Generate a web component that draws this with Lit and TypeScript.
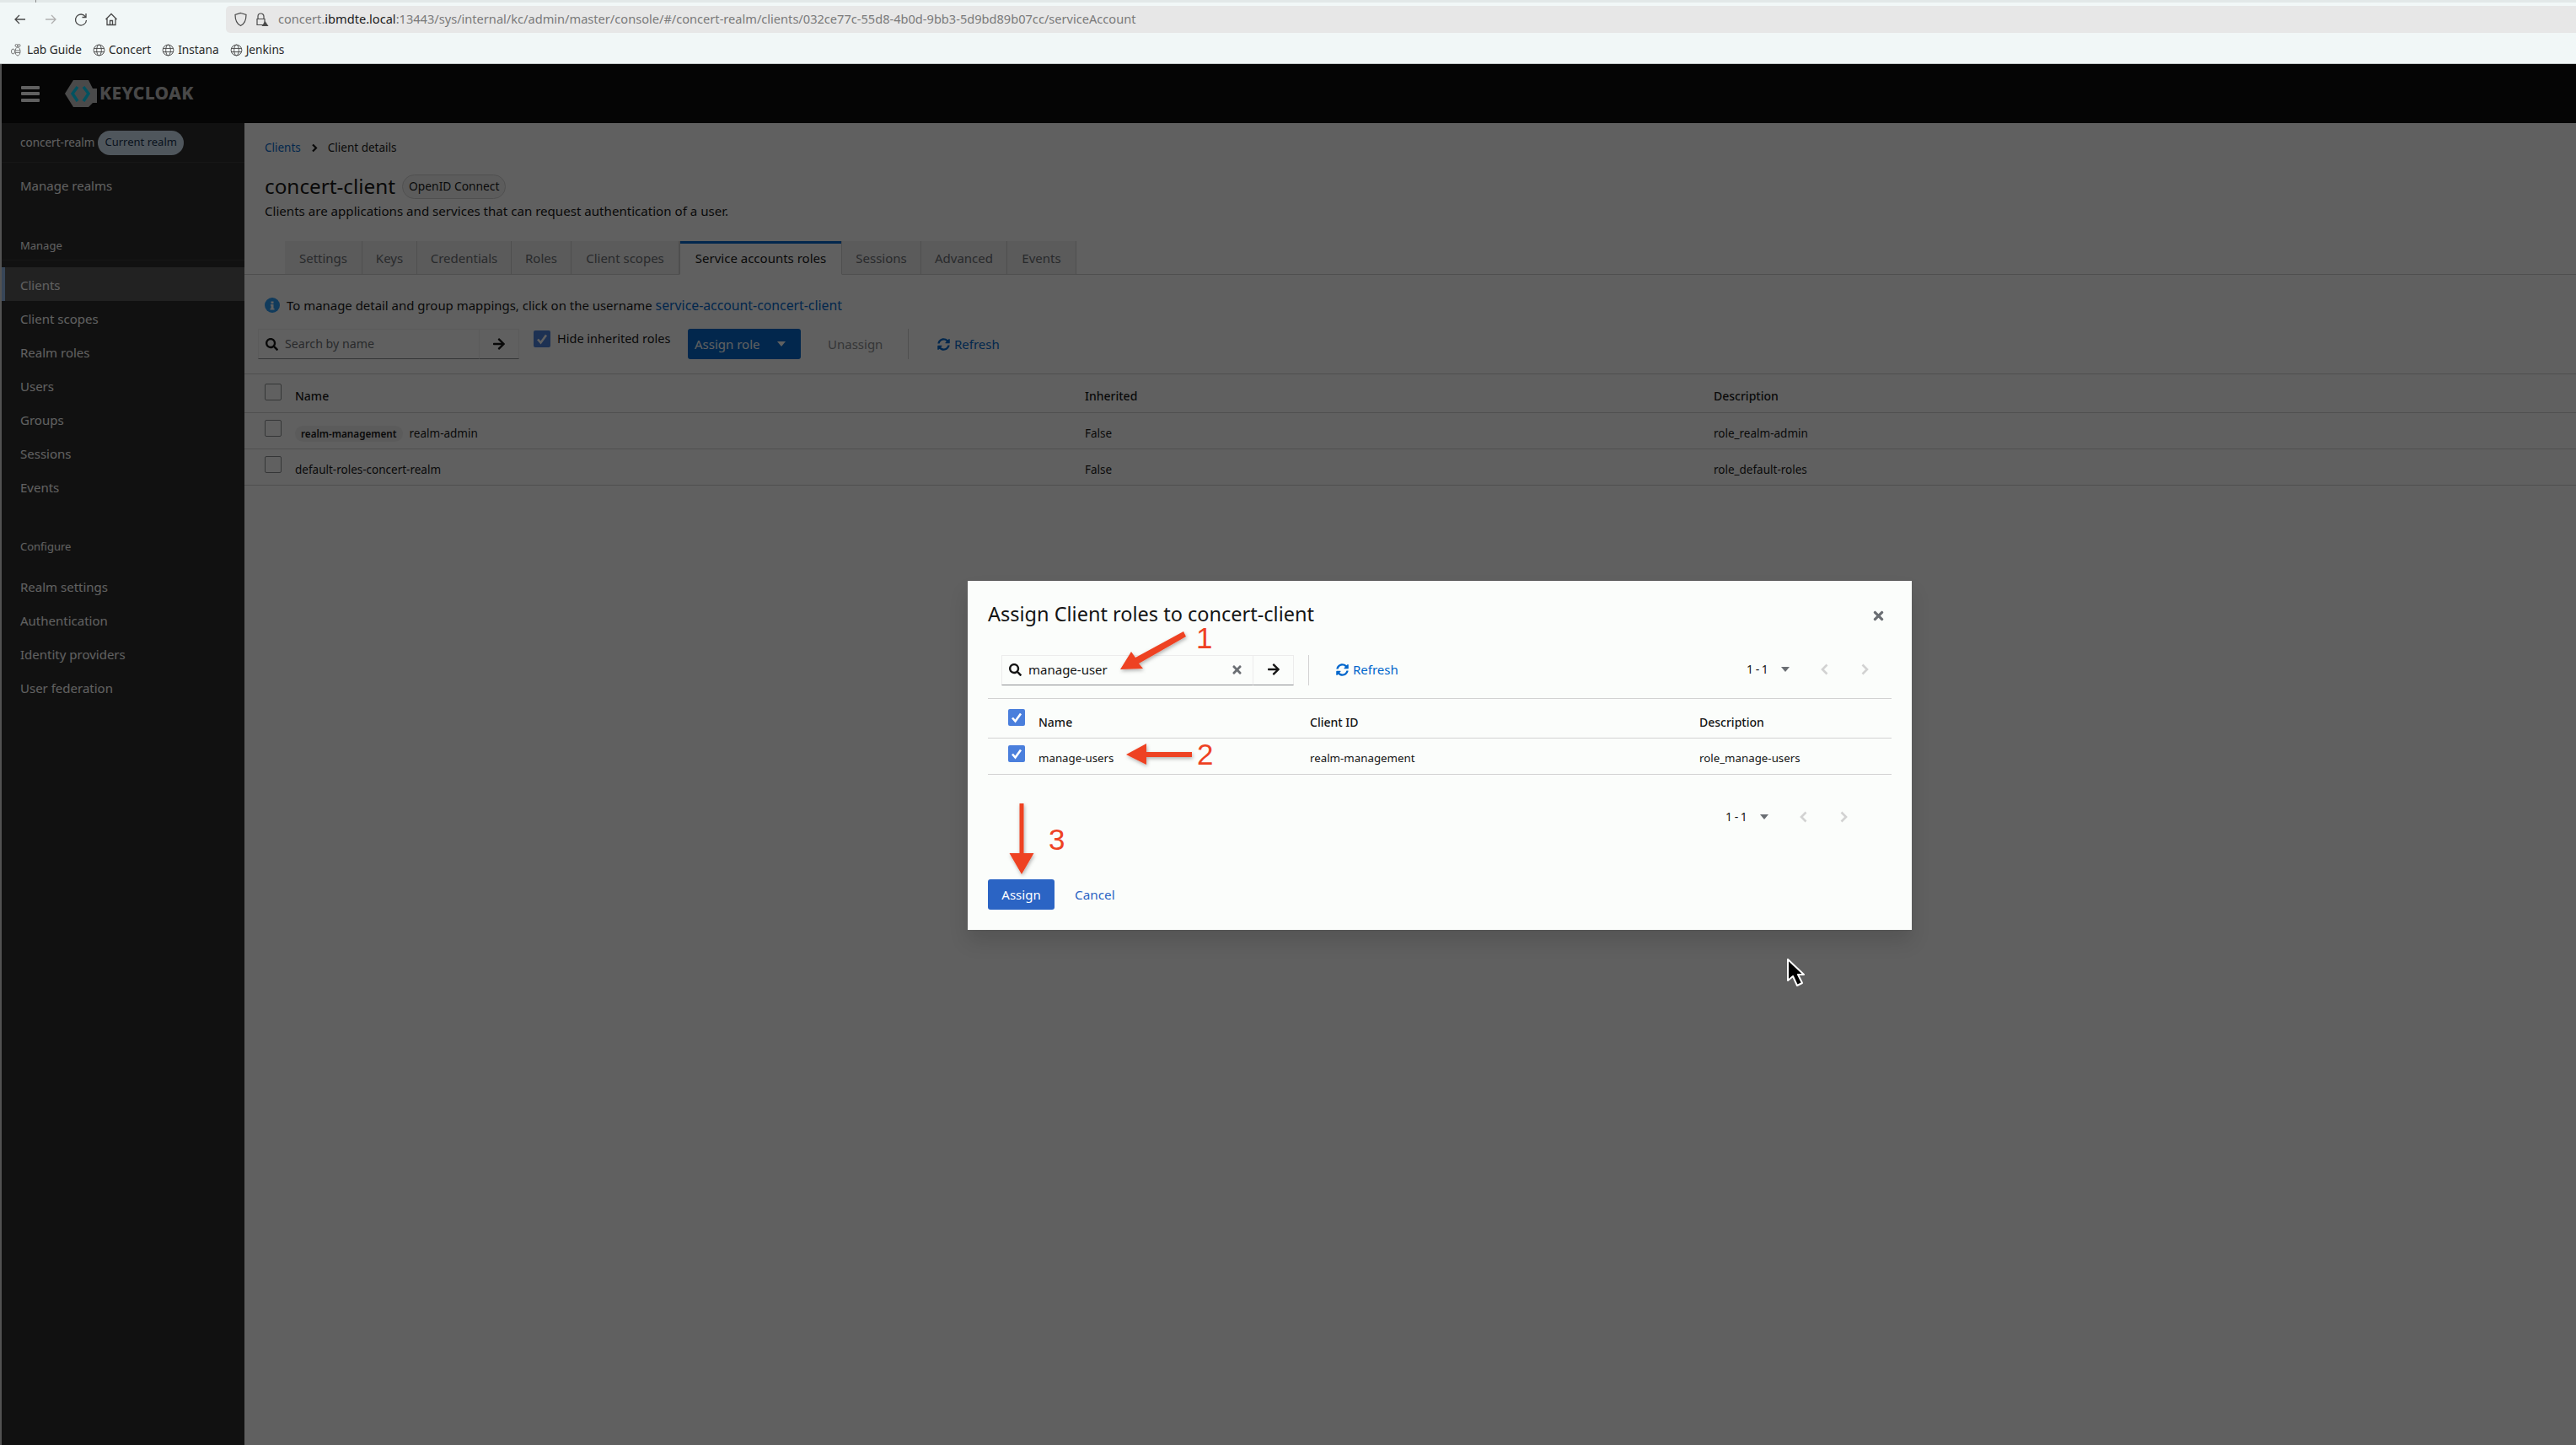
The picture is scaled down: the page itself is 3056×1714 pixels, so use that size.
import {LitElement, html, css, svg} from 'lit';
import {customElement} from 'lit/decorators.js';

const search = svg`<path d="M505 442.700 405.300 343c-4.500-4.500-10.600-7-17-7H372c27.600-35.300 44-79.700 44-128C416 93.100 322.900 0 208 0S0 93.100 0 208s93.100 208 208 208c48.300 0 92.700-16.400 128-44v16.300c0 6.400 2.500 12.500 7 17l99.700 99.700c9.400 9.400 24.600 9.400 33.900 0l28.300-28.300c9.400-9.400 9.400-24.600.1-34zM208 336c-70.700 0-128-57.200-128-128 0-70.700 57.200-128 128-128 70.700 0 128 57.200 128 128 0 70.700-57.200 128-128 128z"/>`;
const arrowRight = svg`<path d="M190.500 66.900l22.200-22.200c9.400-9.400 24.600-9.400 33.900 0L441 239c9.400 9.400 9.400 24.600 0 33.900L246.600 467.300c-9.400 9.400-24.600 9.400-33.900 0l-22.200-22.200c-9.500-9.500-9.300-25 .4-34.300L311.400 296H24c-13.300 0-24-10.700-24-24v-32c0-13.300 10.700-24 24-24h287.400L190.900 101.200c-9.800-9.300-10-24.800-.4-34.300z"/>`;
const sync = svg`<path d="M370.720 133.280C339.458 104.008 298.888 87.962 255.848 88c-77.458.068-144.328 53.178-162.791 126.850-1.344 5.363-6.122 9.150-11.651 9.150H24.103c-7.498 0-13.194-6.807-11.807-14.176C33.933 94.924 134.813 8 256 8c66.448 0 126.791 26.136 171.315 68.685L463.030 40.970C478.149 25.851 504 36.559 504 57.941V192c0 13.255-10.745 24-24 24H345.941c-21.382 0-32.090-25.851-16.971-40.971l41.750-41.749zM32 296h134.059c21.382 0 32.090 25.851 16.971 40.971l-41.750 41.750c31.262 29.273 71.835 45.319 114.876 45.280 77.418-.07 144.315-53.144 162.787-126.849 1.344-5.363 6.122-9.150 11.651-9.150h57.304c7.498 0 13.194 6.807 11.807 14.176C478.067 417.076 377.187 504 256 504c-66.448 0-126.791-26.136-171.315-68.685L48.970 471.030C33.851 486.149 8 475.441 8 454.059V320c0-13.255 10.745-24 24-24z"/>`;
const times = svg`<path d="M242.720 256l100.070-100.070c12.280-12.280 12.280-32.190 0-44.480l-22.240-22.240c-12.280-12.280-32.190-12.280-44.480 0L176 189.280 75.930 89.210c-12.280-12.280-32.190-12.280-44.480 0L9.210 111.450c-12.280 12.280-12.280 32.190 0 44.480L109.280 256 9.210 356.070c-12.280 12.280-12.280 32.190 0 44.480l22.240 22.240c12.280 12.280 32.200 12.280 44.480 0L176 322.720l100.070 100.070c12.280 12.280 32.200 12.280 44.480 0l22.240-22.240c12.280-12.280 12.280-32.190 0-44.480L242.720 256z"/>`;

const icon = (body: unknown, vb: string, cls: string) =>
  html`<svg class=${cls} viewBox=${vb} fill="currentColor" aria-hidden="true">${body}</svg>`;

const check = html`<span class="cb on"><svg viewBox="0 0 20 20"><path d="M5 10.500 8.500 14.500 15 5.500" fill="none" stroke="#fff" stroke-width="2.600"/></svg></span>`;

const globe = html`<svg class="globe" viewBox="0 0 16 16" fill="none" stroke="#4a4a4a" stroke-width="1"><circle cx="8" cy="8" r="6.800"/><ellipse cx="8" cy="8" rx="3" ry="6.800"/><path d="M1.500 5.800h13M1.500 10.200h13"/></svg>`;

const sideManage = ['Clients', 'Client scopes', 'Realm roles', 'Users', 'Groups', 'Sessions', 'Events'];
const sideConfigure = ['Realm settings', 'Authentication', 'Identity providers', 'User federation'];
const tabs = ['Settings', 'Keys', 'Credentials', 'Roles', 'Client scopes', 'Service accounts roles', 'Sessions', 'Advanced', 'Events'];

@customElement('app-pager')
export class AppPager extends LitElement {
  static styles = css`
    :host { display: flex; align-items: center; font-size: 14px; color: #151515; }
    .count { width: 24px; white-space: nowrap; word-spacing: -1px; }
    .caret { width: 0; height: 0; margin-left: 17px; border: 5px solid transparent; border-top: 6px solid #6a6e73; border-bottom: 0; }
    svg { width: 9px; height: 14px; fill: none; stroke: #d2d2d2; stroke-width: 2.600; }
    .prev { margin-left: 37px; }
    .next { margin-left: 39px; }
  `;

  render() {
    return html`
      <span class="count">1 - 1</span>
      <span class="caret"></span>
      <svg class="prev" viewBox="0 0 9 14"><path d="M7.500 1.500 2 7l5.500 5.500"/></svg>
      <svg class="next" viewBox="0 0 9 14"><path d="M1.500 1.500 7 7l-5.500 5.500"/></svg>
    `;
  }
}

@customElement('app-root')
export class AppRoot extends LitElement {
  static styles = css`
    :host {
      display: block;
      width: 3056px;
      height: 1714px;
      overflow: hidden;
      position: relative;
      background: #fff;
      color: #151515;
      font-family: "Noto Sans", sans-serif;
      font-size: 15px;
      line-height: 1.2;
    }
    a { color: #06c; text-decoration: none; }

    /* browser chrome */
    .strip { height: 3px; padding-left: 42px; background: #e2e8e8; }
    .strip i { display: block; width: 1px; height: 3px; background: #8a8a8a; }
    .toolbar { height: 40px; display: flex; align-items: center; background: #f1f7f7; color: #4a4a4a; }
    .nav-ico { width: 18px; height: 18px; fill: none; stroke: #4a4a4a; stroke-width: 1.300; margin-left: 18px; }
    .nav-ico.first { margin-left: 15px; }
    .nav-ico.dim { stroke: #b0b0b0; }
    .urlbar {
      flex: 1;
      height: 32px;
      margin-left: 127px;
      padding-left: 9px;
      border-radius: 5px 0 0 5px;
      display: flex;
      align-items: center;
      gap: 8px;
      background: #e7e7e7;
      font-size: 14.600px;
      color: #7a7a7a;
    }
    .urlbar svg { width: 17px; height: 18px; fill: none; stroke: #4a4a4a; stroke-width: 1.200; }
    .urlbar .txt { margin-left: 3px; white-space: nowrap; }
    .urlbar b { font-weight: 400; color: #1c1c1c; }
    .bookmarks { height: 32px; display: flex; align-items: center; padding-left: 12px; gap: 13px; background: #f1f7f7; font-size: 13.700px; color: #2a2a2a; border-bottom: 1px solid #c4c8c8; }
    .bookmark { display: flex; align-items: center; gap: 4px; }
    .globe { width: 15px; height: 15px; flex: none; }
    .bee { width: 16px; height: 16px; flex: none; }

    /* keycloak page */
    .app { height: 1638px; position: relative; display: flex; flex-direction: column; border-left: 2px solid #dadada; }
    .masthead { height: 70px; flex: none; display: flex; align-items: center; background: #0a0a0a; padding-left: 23px; }
    .burger { width: 22px; height: 19px; display: flex; flex-direction: column; justify-content: space-between; }
    .burger i { height: 4px; background: #fff; border-radius: 1px; }
    .logo { margin-left: 30px; display: flex; align-items: center; }
    .logo svg { width: 40px; height: 36px; }
    .logo span { margin-left: 1px; font-size: 21px; font-weight: 800; letter-spacing: 0.300px; color: #bdbdbd; }
    .body { flex: 1; display: flex; min-height: 0; }

    .sidebar { width: 288px; flex: none; background: #2a2a2a; color: #fff; font-size: 15px; }
    .realm { height: 46px; display: flex; align-items: center; padding-left: 22px; gap: 4px; border-bottom: 1px solid #3a3a3a; font-size: 13.500px; }
    .realm-badge { height: 29px; padding: 0 8px; border-radius: 15px; display: flex; align-items: center; background: #d2e4f5; color: #15304d; font-size: 13px; }
    .side-item { box-sizing: border-box; height: 40px; display: flex; align-items: center; padding: 2px 0 0 22px; }
    .side-item.manage { margin-top: 7px; padding-top: 0; }
    .side-item.active { background: #575757; box-shadow: inset 4px 0 0 #92b8e8; }
    .side-title { box-sizing: border-box; height: 32px; padding: 7px 0 0 22px; font-size: 13px; border-bottom: 1px solid #3a3a3a; margin-top: 37px; }
    .side-title + .side-item { margin-top: 8px; }
    .side-title.cfg { border: 0; margin-top: 36px; height: 28px; padding-top: 8px; }
    .side-title.cfg + .side-item { margin-top: 14px; }

    .main { flex: 1; min-width: 0; display: flex; flex-direction: column; }
    .crumbs { display: flex; align-items: center; padding: 20px 0 0 24px; height: 18px; font-size: 13.500px; }
    .crumbs svg { width: 8px; height: 11px; margin: 0 12px; fill: none; stroke: #151515; stroke-width: 2.200; }
    .title-row { display: flex; align-items: center; gap: 8px; padding: 22px 0 0 24px; height: 30px; }
    .title-row h1 { margin: 0; font-size: 24.300px; font-weight: 400; }
    .label { height: 29px; box-sizing: border-box; padding: 0 7px; border: 1px solid #d2d2d2; border-radius: 15px; display: flex; align-items: center; background: #f5f5f5; font-size: 13.800px; }
    .desc { padding: 5px 0 0 24px; font-size: 15.100px; height: 28px; box-sizing: border-box; }
    .tabs { margin-top: 22px; height: 40px; box-sizing: border-box; padding-left: 48px; display: flex; border-bottom: 1px solid #d2d2d2; }
    .tab { box-sizing: border-box; height: 40px; display: flex; align-items: center; justify-content: center; background: #f0f0f0; border: 1px solid #d2d2d2; border-width: 0 1px 1px 0; color: #6a6e73; font-size: 15px; white-space: nowrap; }
    .tab.active { background: #fff; color: #151515; border-bottom-color: #fff; border-left: 1px solid #d2d2d2; box-shadow: inset 0 3px 0 #06c; }
    .alert { display: flex; align-items: center; gap: 8px; padding: 26px 0 0 24px; height: 20px; font-size: 14.950px; white-space: nowrap; }
    .alert svg { width: 18px; height: 18px; color: #2b9af3; flex: none; }
    .alert a { font-size: 15.800px; }
    .toolbar2 { display: flex; align-items: flex-start; padding: 18px 0 0 16px; height: 36px; }
    .input { box-sizing: border-box; height: 36px; display: flex; align-items: center; background: #fff; border: 1px solid #f0f0f0; border-bottom: 1px solid #8a8d90; }
    .input.field { width: 263px; padding-left: 8px; gap: 8px; color: #6a6e73; font-size: 14.200px; }
    .input.go { width: 47px; justify-content: center; color: #151515; border-left: 0; }
    .input .s { width: 15px; height: 15px; color: #151515; flex: none; }
    .input .a { width: 16px; height: 16px; }
    .check-wrap { display: flex; align-items: center; gap: 8px; margin: 2px 0 0 17px; font-size: 14.500px; width: 183px; height: 20px; white-space: nowrap; }
    .cb { width: 20px; height: 20px; box-sizing: border-box; display: inline-flex; border-radius: 2px; border: 1px solid #8a8d90; background: #fff; flex: none; }
    .cb.on { background: #4a7fdc; border: 0; }
    .cb.on svg { width: 20px; height: 20px; }
    .btn-primary { width: 134px; height: 36px; box-sizing: border-box; display: flex; align-items: center; padding-left: 8px; border-radius: 3px; background: #06c; color: #fff; font-size: 15px; gap: 20px; }
    .btn-primary i { width: 0; height: 0; border: 5px solid transparent; border-top: 6px solid #fff; border-bottom: 0; }
    .plain { width: 128px; height: 36px; display: flex; align-items: center; padding-left: 32px; box-sizing: border-box; color: #8a8d90; font-size: 15px; border-right: 1px solid #d2d2d2; }
    .refresh { display: flex; align-items: center; gap: 5px; color: #06c; font-size: 15px; height: 36px; }
    .refresh svg { width: 15px; height: 15px; }
    .toolbar2 .refresh { margin-left: 34px; }

    .grid-row { display: grid; grid-template-columns: 36px 937px 746px 1fr; border-bottom: 1px solid #d2d2d2; font-size: 13.500px; }
    .grid-row .cb { margin: 8px 0 0 0; }
    .grid-row > span:not(.cb) { padding-top: 16px; }
    .list { margin-top: 17px; border-top: 1px solid #d2d2d2; padding-left: 24px; }
    .list .grid-row { margin-left: -24px; padding-left: 24px; }
    .head { height: 45px; font-weight: 500; font-size: 14px !important; }
    .list .head .cb { margin-top: 11px; }
    .list .head > span:not(.cb) { padding-top: 18px; }
    .row { height: 42px; }
    .chip { display: inline-flex; align-items: center; height: 19px; padding: 0 7px; border-radius: 10px; background: #f0f0f0; font-size: 11.700px; font-weight: 600; margin: -2px 8px 0 0; vertical-align: middle; }

    /* dim layer with the dialog */
    .backdrop { position: absolute; inset: 0 0 0 -2px; background: rgba(3, 3, 3, .63); }
    .modal {
      position: absolute;
      left: 1148px;
      top: 613px;
      width: 1120px;
      height: 414px;
      box-sizing: border-box;
      padding: 0 24px;
      background: #fbfdfb;
      box-shadow: 0 14px 22px rgba(3, 3, 3, .12);
      display: flex;
      flex-direction: column;
    }
    .modal h2 { margin: 0; padding-top: 24px; height: 30px; font-size: 23.500px; font-weight: 400; line-height: 30px; }
    .close { position: absolute; right: 31px; top: 33px; width: 17px; height: 17px; color: #6a6e73; }
    .m-tools { margin-top: 34px; height: 36px; display: flex; align-items: center; padding-left: 16px; }
    .m-tools .field { width: 299px; justify-content: flex-start; color: #151515; border-color: #ececec #ececec #8a8d90; background: transparent; font-size: 15px; padding-bottom: 2px; }
    .m-tools .field .x { width: 15px; height: 15px; margin-left: auto; margin-right: 11px; color: #6a6e73; }
    .m-tools .go { width: 48px; border-color: #ececec #ececec #8a8d90; background: transparent; padding-bottom: 2px; }
    .sep { width: 1px; height: 36px; margin-left: 17px; background: #d2d2d2; }
    .m-tools .refresh { margin-left: 32px; padding-bottom: 2px; box-sizing: border-box; }
    .m-tools app-pager { margin: 0 27px 2px auto; }
    .table { margin-top: 15px; border-top: 1px solid #d2d2d2; }
    .table .grid-row { grid-template-columns: 36px 322px 462px 1fr; padding-left: 24px; font-size: 13.300px; }
    .table .grid-row > span.cb { margin-top: 12px; }
    .table .head { height: 46px; }
    .table .row { height: 42px; }
    .table .grid-row > span:not(.cb) { padding-top: 20px; }
    .table .row > span:not(.cb) { padding-top: 16px; }
    .table .row > span.cb { margin-top: 8px; }
    .m-pager { display: flex; justify-content: flex-end; margin: 42px 52px 0 0; height: 16px; }
    .actions { margin-top: 66px; display: flex; align-items: center; gap: 24px; }
    .assign { width: 79px; height: 36px; border-radius: 3px; display: flex; align-items: center; justify-content: center; background: #2b64c4; color: #fff; font-size: 15px; }
    .cancel { color: #2b64c4; font-size: 15.300px; }

    .marks { position: absolute; inset: 0; width: 100%; height: 100%; pointer-events: none; overflow: visible; }
    .digit { position: absolute; font-family: "Liberation Sans", sans-serif; font-size: 35px; line-height: 40px; color: #ee4223; }
    .cursor { position: absolute; left: 2118px; top: 1060px; width: 28px; height: 40px; }
  `;

  render() {
    return html`
      <div class="strip"><i></i></div>
      <div class="toolbar">
        <svg class="nav-ico first" viewBox="0 0 18 18"><path d="M15 9H3M8 4 3 9l5 5"/></svg>
        <svg class="nav-ico dim" viewBox="0 0 18 18"><path d="M3 9h12M10 4l5 5-5 5"/></svg>
        <svg class="nav-ico" viewBox="0 0 18 18"><path d="M14.500 6A6.500 6.500 0 1 0 15.500 10M15 2v4.500h-4.500"/></svg>
        <svg class="nav-ico" viewBox="0 0 18 18"><path d="M2.500 9 9 2.500 15.500 9M4 8v7.500h10V8M7.500 15.500v-5h3v5"/></svg>
        <div class="urlbar">
          <svg viewBox="0 0 17 18"><path d="M8.500 1.500 15 3.500c0 7-2 11-6.500 13C4 14.500 2 10.500 2 3.500z"/></svg>
          <svg viewBox="0 0 17 18"><path d="M4 8.500V5.500a3.500 3.500 0 0 1 7 0v3M3 8.500h9v7H3z"/><path d="M12.500 11 16.500 17h-8z" fill="#4a4a4a" stroke="none"/></svg>
          <span class="txt">concert.<b>ibmdte.local</b>:13443/sys/internal/kc/admin/master/console/#/concert-realm/clients/032ce77c-55d8-4b0d-9bb3-5d9bd89b07cc/serviceAccount</span>
        </div>
      </div>
      <div class="bookmarks">
        <span class="bookmark">
          <svg class="bee" viewBox="0 0 16 16" fill="none" stroke="#777" stroke-width="1"><ellipse cx="9" cy="10" rx="3" ry="5"/><circle cx="7.500" cy="3" r="1.500"/><circle cx="10.500" cy="3" r="1.500"/><ellipse cx="3.500" cy="10" rx="2" ry="3"/><path d="M6 9h6M6 11.500h6"/></svg>
          Lab Guide
        </span>
        <span class="bookmark">${globe}Concert</span>
        <span class="bookmark">${globe}Instana</span>
        <span class="bookmark">${globe}Jenkins</span>
      </div>

      <div class="app">
        <div class="masthead">
          <div class="burger"><i></i><i></i><i></i></div>
          <div class="logo">
            <svg viewBox="0 0 40 36">
              <path d="M0 18 10 2h18l5 10h5v17h-5l-5 5H10z" fill="#c4c4c4"/>
              <path d="M15 10 9 18l6 9M22 10l6 8-6 9" fill="none" stroke="#00d8ff" stroke-width="3.500"/>
            </svg>
            <span>KEYCLOAK</span>
          </div>
        </div>
        <div class="body">
          <nav class="sidebar">
            <div class="realm">concert-realm<span class="realm-badge">Current realm</span></div>
            <div class="side-item manage">Manage realms</div>
            <div class="side-title">Manage</div>
            ${sideManage.map(t => html`<div class="side-item ${t === 'Clients' ? 'active' : ''}">${t}</div>`)}
            <div class="side-title cfg">Configure</div>
            ${sideConfigure.map(t => html`<div class="side-item">${t}</div>`)}
          </nav>
          <main class="main">
            <div class="crumbs">
              <a>Clients</a>
              <svg viewBox="0 0 8 11"><path d="M2 1.500 6 5.500 2 9.500"/></svg>
              Client details
            </div>
            <div class="title-row"><h1>concert-client</h1><span class="label">OpenID Connect</span></div>
            <div class="desc">Clients are applications and services that can request authentication of a user.</div>
            <div class="tabs">
              ${tabs.map((t, i) => html`<div class="tab ${i === 5 ? 'active' : ''}" style="width:${[92, 65, 112, 71, 128, 193, 94, 102, 82][i]}px">${t}</div>`)}
            </div>
            <div class="alert">
              <svg viewBox="0 0 18 18"><circle cx="9" cy="9" r="9" fill="currentColor"/><path d="M7.500 4.500h3v2.500h-3zM7 8h3.500v4.800h1V14.500h-5v-1.700h1v-3.100H7z" fill="#fff"/></svg>
              <span>To manage detail and group mappings, click on the username <a>service-account-concert-client</a></span>
            </div>
            <div class="toolbar2">
              <div class="input field">${icon(search, '0 0 512 512', 's')}Search by name</div>
              <div class="input go">${icon(arrowRight, '0 0 448 512', 'a')}</div>
              <label class="check-wrap">${check}Hide inherited roles</label>
              <div class="btn-primary">Assign role<i></i></div>
              <div class="plain">Unassign</div>
              <div class="refresh">${icon(sync, '0 0 512 512', '')}Refresh</div>
            </div>
            <div class="list">
              <div class="grid-row head"><span class="cb"></span><span>Name</span><span>Inherited</span><span>Description</span></div>
              <div class="grid-row row"><span class="cb"></span><span><span class="chip">realm-management</span>realm-admin</span><span>False</span><span>role_realm-admin</span></div>
              <div class="grid-row row"><span class="cb"></span><span>default-roles-concert-realm</span><span>False</span><span>role_default-roles</span></div>
            </div>
          </main>
        </div>

        <div class="backdrop">
          <section class="modal">
            <h2>Assign Client roles to concert-client</h2>
            ${icon(times, '0 0 352 512', 'close')}
            <div class="m-tools">
              <div class="input field">${icon(search, '0 0 512 512', 's')}manage-user${icon(times, '0 0 352 512', 'x')}</div>
              <div class="input go">${icon(arrowRight, '0 0 448 512', 'a')}</div>
              <div class="sep"></div>
              <div class="refresh">${icon(sync, '0 0 512 512', '')}Refresh</div>
              <app-pager></app-pager>
            </div>
            <div class="table">
              <div class="grid-row head">${check}<span>Name</span><span>Client ID</span><span>Description</span></div>
              <div class="grid-row row">${check}<span>manage-users</span><span>realm-management</span><span>role_manage-users</span></div>
            </div>
            <div class="m-pager"><app-pager></app-pager></div>
            <div class="actions"><div class="assign">Assign</div><a class="cancel">Cancel</a></div>

            <svg class="marks" viewBox="0 0 1120 414">
              <defs><filter id="sh" x="-30%" y="-30%" width="160%" height="160%"><feDropShadow dx="1" dy="2" stdDeviation="2" flood-color="#000" flood-opacity=".3"/></filter></defs>
              <g filter="url(#sh)" fill="#ee4223">
                <path d="M181 105 194 84l5 7 57-31 3 6-56 32 5 6z"/>
                <path d="M188 206 212 193v10h54v6h-54v9z"/>
                <path d="M61.500 264h5v59h12L64 348 49.500 323h12z"/>
              </g>
            </svg>
            <span class="digit" style="left:271px;top:48px">1</span>
            <span class="digit" style="left:272px;top:186px">2</span>
            <span class="digit" style="left:96px;top:287px">3</span>
          </section>
          <svg class="cursor" viewBox="0 0 28 40"><path d="M3 2v25l6-5 5 11 6-3-5-10h7z" fill="#000" stroke="#fff" stroke-width="2" stroke-linejoin="round"/></svg>
        </div>
      </div>
    `;
  }
}
